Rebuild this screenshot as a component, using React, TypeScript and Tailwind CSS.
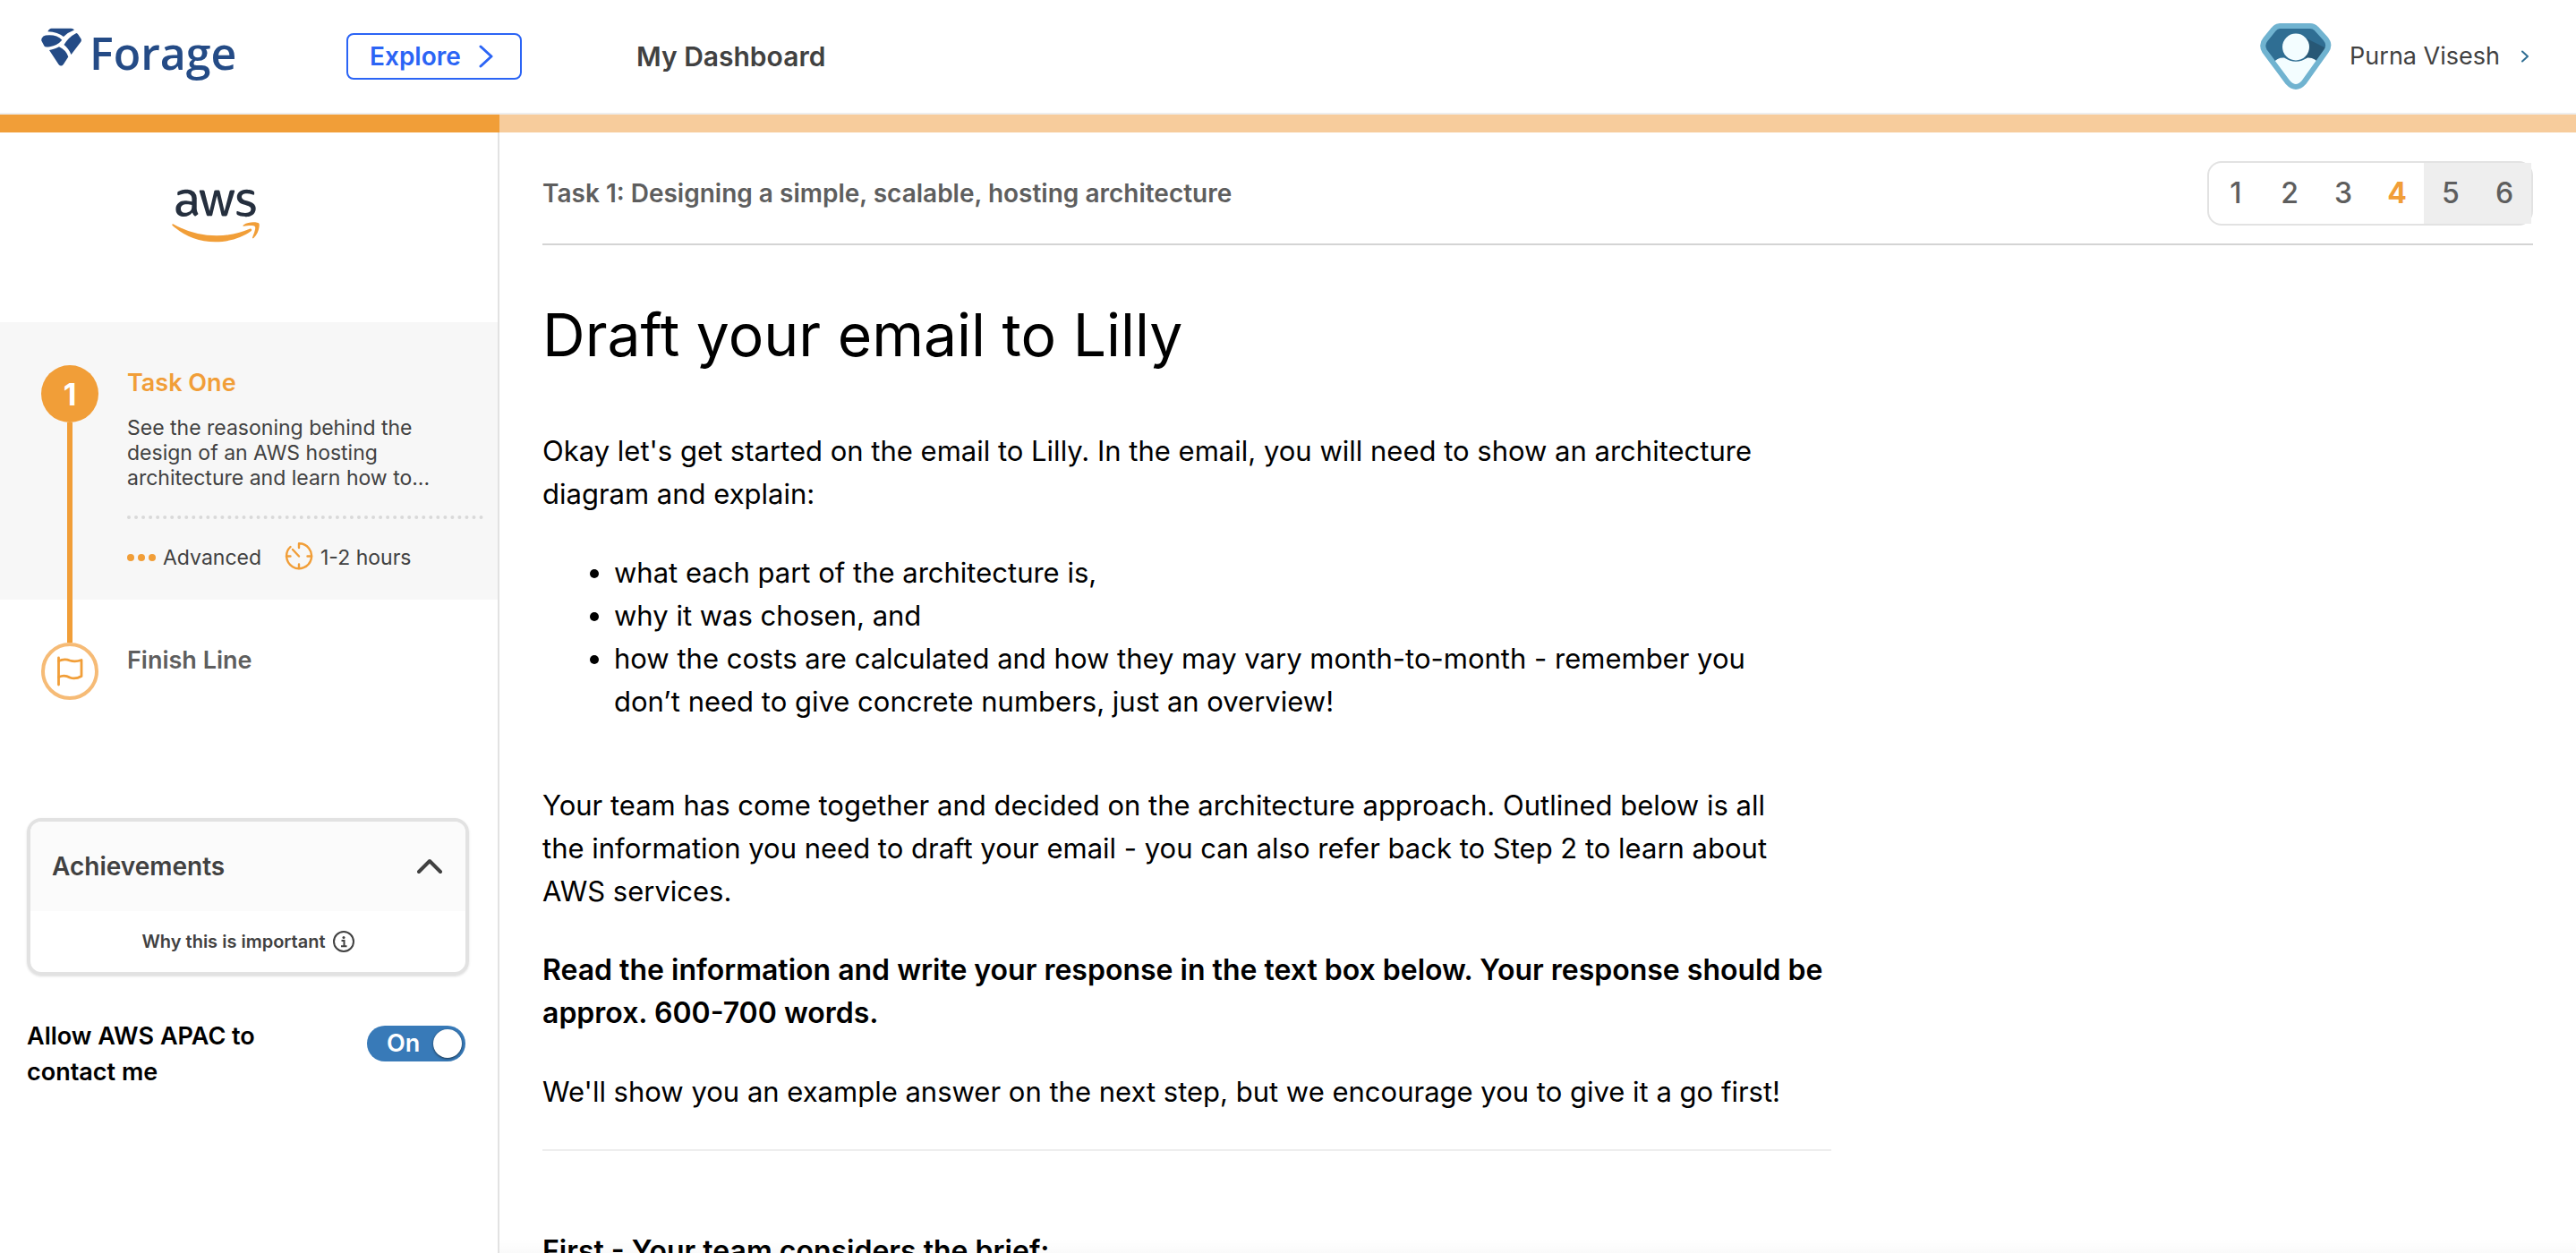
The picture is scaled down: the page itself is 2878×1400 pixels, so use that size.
import { FaAws } from "react-icons/fa";

function ForageMark() {
  return (
    <svg viewBox="0 0 46 44" className="h-11 w-[46px] shrink-0" fill="#244b86" aria-hidden="true">
      <path d="M7.300 4.200 Q9 .7 11.500 .7 H33.500 Q35.800 .8 37 2.500 Q30 5 25 10 Q19 4.600 7.300 4.200Z" />
      <path d="M39.300 6 Q40.500 6 41.300 7.500 L44.600 12.500 Q45.400 14 44.500 15.500 L33.500 30 Q30.500 23 25.500 19 Q30.500 10.500 39.300 6Z" />
      <path d="M.3 14.500 Q0 13 .8 11.500 Q2 9 5 8.500 Q17 7 23.300 13.700 Q18 20 9.500 21.200 Q4.500 22.300 3.500 20.500Z" />
      <path d="M9 25 Q13.500 24.600 20 21.300 Q27.500 24.500 30.300 32.500 L24.800 41 Q22.300 44 19.500 41Z" />
    </svg>
  );
}

function Avatar() {
  return (
    <svg viewBox="0 0 80 74" className="h-[74px] w-20 shrink-0" aria-hidden="true">
      <defs>
        <clipPath id="gem">
          <path d="M22 3 H56 Q60 3 63 6 L73 17 Q79 24 74 31 L49 66 Q40 76 31 66 L5 31 Q1 24 6 18 L15 7 Q18 3 22 3Z" />
        </clipPath>
      </defs>
      <g clipPath="url(#gem)">
        <rect width="80" height="74" fill="#2f6e93" />
        <path d="M52 17 L80 31 V50 H50Z" fill="#275876" />
        <path d="M14 46 Q18 38 27 38.500 Q40 47 53 38.500 Q62 38 66 46 L50 74 H30Z" fill="#f3fdff" />
      </g>
      <circle cx="40" cy="26.500" r="15" fill="#f3fdff" />
      <path
        d="M22 3 H56 Q60 3 63 6 L73 17 Q79 24 74 31 L49 66 Q40 76 31 66 L5 31 Q1 24 6 18 L15 7 Q18 3 22 3Z"
        fill="none"
        stroke="#70b3d0"
        strokeWidth="6"
      />
    </svg>
  );
}

function Chevron({ className, width }: { className: string; width: number }) {
  return (
    <svg
      viewBox="0 0 16 26"
      className={className}
      fill="none"
      stroke="currentColor"
      strokeWidth={width}
      strokeLinecap="round"
      strokeLinejoin="round"
      aria-hidden="true"
    >
      <path d="M2 2 L14 13 L2 24" />
    </svg>
  );
}

function ClockIcon() {
  return (
    <svg
      viewBox="0 0 32 32"
      className="size-8"
      fill="none"
      stroke="#f19e38"
      strokeWidth="2.4"
      strokeLinecap="round"
      strokeLinejoin="round"
      aria-hidden="true"
    >
      <path d="M16 7 V2.200 A14 14 0 1 1 6.500 6" />
      <path d="M9 9 L16 16.500 M2 16.500 H6.500 M25.500 16.500 H30 M16 30 V25.500" />
    </svg>
  );
}

function FlagIcon() {
  return (
    <svg
      viewBox="0 0 30 34"
      className="h-[34px] w-[30px]"
      fill="none"
      stroke="#f19e38"
      strokeWidth="2.800"
      strokeLinecap="round"
      strokeLinejoin="round"
      aria-hidden="true"
    >
      <path d="M2.500 2 V32" />
      <path d="M2.500 5.500 Q9 2.500 15 5 Q21 7 28 4.500 V22.500 Q21 26.500 15 24 Q9 20.500 2.500 23.500" />
    </svg>
  );
}

function InfoIcon() {
  return (
    <svg viewBox="0 0 24 24" className="size-6" fill="none" stroke="#414141" strokeWidth="2" aria-hidden="true">
      <circle cx="12" cy="12" r="11" />
      <path d="M9.500 11 H12.500 V17 M9 17.200 H15.500" />
      <circle cx="12" cy="7.500" r="1.500" fill="#414141" stroke="none" />
    </svg>
  );
}

const steps = [1, 2, 3, 4, 5, 6];

function Header() {
  return (
    <header className="flex h-32 items-center border-b-2 border-[#eeeeee] pr-[53px] pl-[46px]">
      <a href="#home" className="flex h-16 w-[341px] items-start" aria-label="Forage home">
        <ForageMark />
        <span className="ml-2 font-['Open_Sans'] text-[50px] leading-[56px] font-semibold text-[#244b86]">Forage</span>
      </a>
      <button className="flex h-[52px] w-[196px] items-center justify-between rounded-lg border-2 border-[#2b64f5] pr-[30px] pl-6 text-[28px] font-semibold text-[#2b64f5]">
        Explore
        <Chevron className="h-[26px] w-4" width={3} />
      </button>
      <a href="#dashboard" className="ml-32 text-[30px] font-semibold text-[#414141]">
        My Dashboard
      </a>
      <button className="ml-auto flex items-center text-[27px] text-[#414141]">
        <Avatar />
        <span className="ml-5">Purna Visesh</span>
        <Chevron className="ml-6 h-[14px] w-2 text-[#2f6e93]" width={4} />
      </button>
    </header>
  );
}

function Sidebar() {
  return (
    <aside className="w-[558px] shrink-0 border-r-2 border-[#e2e2e2]">
      <div className="flex h-[212px] justify-center pt-[54px] pr-[74px]">
        <svg className="absolute size-0" aria-hidden="true">
          <linearGradient id="awsFill" x1="0" y1="0" x2="0" y2="1">
            <stop offset="0.57" stopColor="#252f3e" />
            <stop offset="0.57" stopColor="#f19e38" />
          </linearGradient>
        </svg>
        <FaAws className="h-[78px] w-[98px]" fill="url(#awsFill)" title="AWS" />
      </div>

      <ol>
        <li className="flex bg-[#f7f7f7] pl-[46px]">
          <div className="flex w-16 shrink-0 flex-col items-center pt-12">
            <span className="flex size-16 shrink-0 items-center justify-center rounded-full bg-[#f19e38] text-[34px] font-bold text-white">
              1
            </span>
            <span className="w-[6px] grow bg-[#f19e38]" />
          </div>
          <div className="ml-8 grow pt-12 pr-4 pb-8">
            <h2 className="text-[27px] leading-10 font-semibold text-[#f19e38]">Task One</h2>
            <p className="mt-4 text-[23px] leading-7 text-[#414141]">
              See the reasoning behind the
              <br />
              design of an AWS hosting
              <br />
              architecture and learn how to...
            </p>
            <div className="mt-7 border-t-4 border-dotted border-[#d9d9d9]" />
            <div className="mt-6 flex h-[34px] items-center text-[23px] text-[#414141]">
              <span className="flex gap-1 pt-1">
                <i className="size-2 rounded-full bg-[#f19e38]" />
                <i className="size-2 rounded-full bg-[#f19e38]" />
                <i className="size-2 rounded-full bg-[#f19e38]" />
              </span>
              <span className="ml-2 pt-1">Advanced</span>
              <span className="ml-[26px]">
                <ClockIcon />
              </span>
              <span className="ml-2 pt-1">1-2 hours</span>
            </div>
          </div>
        </li>
        <li className="flex pl-[46px]">
          <div className="flex w-16 flex-col items-center">
            <span className="h-12 w-[6px] bg-[#f19e38]" />
            <span className="flex size-16 items-center justify-center rounded-full border-4 border-[#f6bb76]">
              <FlagIcon />
            </span>
          </div>
          <h2 className="ml-8 pt-12 text-[27px] leading-10 font-semibold text-[#5e5e5e]">Finish Line</h2>
        </li>
      </ol>

      <section className="mt-[132px] mr-8 ml-[30px] overflow-hidden rounded-2xl border-4 border-[#e2e2e2] shadow-sm">
        <button className="flex h-[100px] w-full items-center justify-between bg-[#fbfbfb] pr-[26px] pl-6 text-[28px] font-semibold text-[#414141]">
          Achievements
          <svg
            viewBox="0 0 28 18"
            className="h-[18px] w-7"
            fill="none"
            stroke="currentColor"
            strokeWidth="4"
            strokeLinecap="round"
            strokeLinejoin="round"
            aria-hidden="true"
          >
            <path d="M2 15 L14 3 L26 15" />
          </svg>
        </button>
        <button className="flex h-[68px] w-full items-center justify-center gap-2 text-[20px] font-semibold text-[#414141]">
          Why this is important
          <InfoIcon />
        </button>
      </section>

      <div className="mt-12 mr-9 ml-[30px] flex justify-between">
        <label htmlFor="contact" className="w-[300px] text-[27px] leading-10 font-semibold text-black">
          Allow AWS APAC to contact me
        </label>
        <label className="relative mt-2 flex h-10 w-[110px] items-center rounded-full bg-[#387ab8] pr-1 pl-[22px] text-[27px] font-semibold text-white">
          <input id="contact" type="checkbox" role="switch" defaultChecked className="absolute inset-0 size-full cursor-pointer opacity-0" />
          On
          <span className="ml-auto size-8 rounded-full bg-white shadow-sm shadow-black/50" />
        </label>
      </div>
    </aside>
  );
}

function Lesson() {
  return (
    <main className="min-w-0 grow pr-12 pl-12">
      <div className="flex items-center justify-between border-b-2 border-[#d4d4d4] pt-8 pb-5">
        <h2 className="text-[28px] font-semibold text-[#5e5e5e]">Task 1: Designing a simple, scalable, hosting architecture</h2>
        <nav aria-label="Steps" className="flex h-[72px] rounded-2xl border-2 border-[#e2e2e2] text-[32px] font-medium text-[#5e5e5e]">
          {steps.map((n) => (
            <a
              key={n}
              href={`#step-${n}`}
              className={
                n === 4
                  ? "flex w-[60px] items-center justify-center font-bold text-[#f19e38]"
                  : n > 4
                    ? "flex w-[60px] items-center justify-center bg-[#eeeeee]"
                    : "flex w-[60px] items-center justify-center"
              }
            >
              {n}
            </a>
          ))}
        </nav>
      </div>

      <article className="max-w-[1440px] text-[31px] leading-12 text-black">
        <h1 className="mt-14 text-[66px] leading-[88px]">Draft your email to Lilly</h1>
        <p className="mt-[62px]">
          Okay let's get started on the email to Lilly. In the email, you will need to show an architecture
          <br />
          diagram and explain:
        </p>
        <ul className="mt-10 list-disc pl-20">
          <li>what each part of the architecture is,</li>
          <li>why it was chosen, and</li>
          <li>
            how the costs are calculated and how they may vary month-to-month - remember you
            <br />
            don’t need to give concrete numbers, just an overview!
          </li>
        </ul>
        <p className="mt-[68px]">
          Your team has come together and decided on the architecture approach. Outlined below is all
          <br />
          the information you need to draft your email - you can also refer back to Step 2 to learn about
          <br />
          AWS services.
        </p>
        <p className="mt-10 text-[32px] leading-12 font-semibold">
          Read the information and write your response in the text box below. Your response should be
          <br />
          approx. 600-700 words.
        </p>
        <p className="mt-10">We'll show you an example answer on the next step, but we encourage you to give it a go first!</p>
        <hr className="mt-10 border-t-2 border-[#eeeeee]" />
        <p className="mt-[88px] text-[32px] leading-12 font-semibold">First - Your team considers the brief:</p>
      </article>
    </main>
  );
}

export default function App() {
  return (
    <div className="relative h-screen overflow-hidden bg-white font-[Inter,sans-serif]">
      <Header />
      <div className="flex h-5 bg-[#f7cc9c]">
        <div className="w-[558px] bg-[#f19e38]" />
      </div>
      <div className="flex min-h-full">
        <Sidebar />
        <Lesson />
      </div>
      <div className="pointer-events-none absolute right-0 bottom-0 left-[558px] h-4 bg-linear-to-b from-transparent to-black/2" />
    </div>
  );
}
